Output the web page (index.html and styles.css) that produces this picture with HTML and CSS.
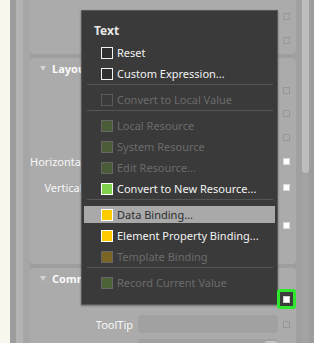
FILE: index.html
```html
<!DOCTYPE html>
<html lang="en">
<head>
  <meta charset="UTF-8">
  <title>Property Menu</title>
  <link rel="stylesheet" href="styles.css">
</head>
<body>
  <div class="screen">
    <div class="gutter"></div>
    <div class="rail rail-dark"></div>
    <div class="rail rail-light"></div>
    <div class="rail rail-mid"></div>

    <!-- Property panel behind the menu -->
    <div class="panel">
      <div class="card card-top">
        <div class="row"><span class="label"></span><span class="field"></span><span class="mark"></span></div>
        <div class="row"><span class="label"></span><span class="field"></span><span class="mark"></span></div>
      </div>

      <div class="card card-layout">
        <div class="card-head"><span class="caret"></span>Layout</div>
        <div class="row"><span class="label"></span><span class="field"></span><span class="mark"></span></div>
        <div class="row row-short"><span class="label"></span><span class="field"></span><span class="mark"></span></div>
        <div class="row"><span class="label"></span><span class="field"></span><span class="mark"></span></div>
        <div class="row"><span class="label">Horizontal Alignment</span><span class="field"></span><span class="mark mark-set"></span></div>
        <div class="row row-tall"><span class="label">Vertical Alignment</span><span class="field"></span><span class="mark mark-set"></span></div>
        <div class="row row-margin"><span class="label"></span><span class="field"></span><span class="mark mark-set"></span></div>
      </div>

      <div class="card">
        <div class="card-head"><span class="caret"></span>Common Properties</div>
        <div class="row"><span class="label"></span><span class="field"></span><span class="mark mark-hidden"></span></div>
        <div class="row"><span class="label">ToolTip</span><span class="field field-show"></span><span class="mark"></span></div>
        <div class="row"><span class="label"></span><span class="field field-show"><span class="field-btn"></span></span><span class="mark"></span></div>
      </div>
    </div>

    <div class="scroll">
      <div class="scroll-edge"></div>
      <div class="scroll-track"><div class="scroll-thumb"></div></div>
      <div class="scroll-edge"></div>
    </div>

    <!-- Context menu -->
    <div class="menu">
      <div class="menu-title">Text</div>
      <div class="item"><span class="box box-plain"></span>Reset</div>
      <div class="item"><span class="box box-plain"></span>Custom Expression...</div>
      <div class="sep"></div>
      <div class="item disabled"><span class="box box-empty"></span>Convert to Local Value</div>
      <div class="sep"></div>
      <div class="item disabled"><span class="box box-resource"></span>Local Resource</div>
      <div class="item disabled"><span class="box box-resource"></span>System Resource</div>
      <div class="item disabled"><span class="box box-resource"></span>Edit Resource...</div>
      <div class="item"><span class="box box-new"></span>Convert to New Resource...</div>
      <div class="sep"></div>
      <div class="item hover"><span class="box box-binding"></span>Data Binding...</div>
      <div class="item"><span class="box box-binding"></span>Element Property Binding...</div>
      <div class="item disabled"><span class="box box-template"></span>Template Binding</div>
      <div class="sep"></div>
      <div class="item disabled"><span class="box box-record"></span>Record Current Value</div>
    </div>

    <div class="focus-mark"><span></span></div>
  </div>
</body>
</html>
```

FILE: styles.css
```css
/* General reset */
* {
  margin: 0;
  padding: 0;
  box-sizing: border-box;
}

body {
  font-family: "Noto Sans", "Open Sans", Arial, sans-serif;
  font-size: 11px;
  background-color: #f8f8ef;
  width: 314px;
  height: 343px;
  overflow: hidden;
}

.screen {
  position: relative;
  display: flex;
  width: 314px;
  height: 343px;
  overflow: hidden;
}

.gutter {
  width: 10px;
  background: #f8f8ef;
}

.rail {
  width: 6px;
}

.rail-dark {
  background: #9d9d9d;
}

.rail-light {
  width: 7px;
  background: #b3b3b3;
}

.rail-mid {
  width: 7px;
  background: #a6a6a6;
}

/* Property panel */
.panel {
  width: 266px;
  display: flex;
  flex-direction: column;
  gap: 4px;
  background: #9e9e9e;
}

.card {
  background: #ababab;
  border-radius: 4px;
  padding-bottom: 15px;
}

.card-top {
  padding-top: 4px;
  padding-bottom: 2px;
  border-radius: 0 0 4px 4px;
}

.card-head {
  height: 20px;
  display: flex;
  align-items: center;
  padding-left: 10px;
  font-weight: bold;
  color: #fafafa;
  white-space: nowrap;
}

.caret {
  width: 0;
  height: 0;
  margin-right: 6px;
  border-left: 3px solid transparent;
  border-right: 3px solid transparent;
  border-top: 5px solid #d4d4d4;
}

.row {
  height: 24px;
  display: flex;
  align-items: center;
  gap: 5px;
  padding-right: 6px;
}

.row-short {
  height: 23px;
}

.row-tall {
  height: 28px;
}

.row-margin {
  height: 48px;
}

.label {
  flex: 1;
  text-align: right;
  white-space: nowrap;
  color: #f8f8f8;
}

/* layout labels run a little under the field column */
.card-layout .label {
  margin-right: -6px;
}

.field {
  position: relative;
  width: 140px;
  height: 18px;
  border-radius: 4px;
}

.field-show {
  background: #a1a1a1;
}

.field-btn {
  position: absolute;
  right: 0;
  top: 2px;
  width: 14px;
  height: 14px;
  border-radius: 4px;
  background: #c4c4c4;
}

.mark {
  width: 7px;
  height: 7px;
  border: 1px solid #979797;
}

.mark-set {
  background: #ffffff;
  border-color: #d8d8d8;
}

.mark-hidden {
  visibility: hidden;
}

/* Scrollbar */
.scroll {
  flex: 1;
  display: flex;
}

.scroll-edge {
  width: 6px;
  background: #a0a0a0;
}

.scroll-edge:last-child {
  width: 5px;
  background: #9d9d9d;
}

.scroll-track {
  width: 7px;
  background: #a3a3a3;
}

.scroll-thumb {
  height: 173px;
  background: #bdbdbd;
  border-radius: 0 0 4px 4px;
}

/* Context menu */
.menu {
  position: absolute;
  left: 81px;
  top: 10px;
  width: 197px;
  height: 295px;
  background: #3a3a3a;
  border: 1px solid #565656;
  box-shadow: 0 1px 2px rgba(0, 0, 0, 0.35);
}

.menu-title {
  height: 31px;
  padding: 12px 0 0 12px;
  line-height: 16px;
  font-size: 12px;
  font-weight: bold;
  color: #e8e8e8;
}

.item {
  height: 21px;
  display: flex;
  align-items: center;
  gap: 4px;
  padding-left: 19px;
  color: #f2f2f2;
  white-space: nowrap;
}

.item.disabled {
  color: #6b6b6b;
}

.item.hover {
  margin: 2px 2px;
  height: 17px;
  padding-left: 17px;
  background: #a9a9a9;
  color: #2e2e2e;
}

.sep {
  height: 5px;
  margin: 0 4px 0 5px;
  border-top: 1px solid #555555;
}

.box {
  width: 12px;
  height: 12px;
  border: 1px solid #f2f2f2;
  flex-shrink: 0;
}

.box-plain {
  background: #303030;
}

.box-empty {
  border-color: #5a5a5a;
}

.box-resource {
  background: #4b5d37;
  border-color: #666666;
}

.box-new {
  background: #80cf4d;
  border-color: #ffffff;
}

.box-binding {
  background: #ffcc00;
  border-color: #ffffff;
}

.box-template {
  background: #796421;
  border-color: #676767;
}

.box-record {
  background: #4b6336;
  border-color: #676767;
}

/* Focused property marker over the menu edge */
.focus-mark {
  position: absolute;
  left: 277px;
  top: 289px;
  width: 19px;
  height: 20px;
  display: flex;
  align-items: center;
  justify-content: center;
  background: #3c3c3c;
  border: 3px solid #2ee82e;
  border-radius: 3px;
}

.focus-mark span {
  width: 7px;
  height: 7px;
  background: #ffffff;
  border: 1px solid #d0d0d0;
}
```
